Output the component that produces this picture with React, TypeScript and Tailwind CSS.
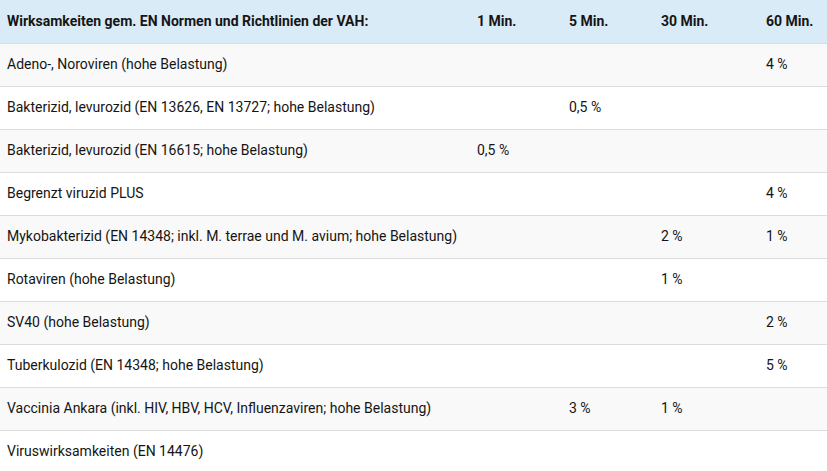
import React from "react";

const rows: [string, string, string, string, string][] = [
  ["Adeno-, Noroviren (hohe Belastung)", "", "", "", "4 %"],
  ["Bakterizid, levurozid (EN 13626, EN 13727; hohe Belastung)", "", "0,5 %", "", ""],
  ["Bakterizid, levurozid (EN 16615; hohe Belastung)", "0,5 %", "", "", ""],
  ["Begrenzt viruzid PLUS", "", "", "", "4 %"],
  ["Mykobakterizid (EN 14348; inkl. M. terrae und M. avium; hohe Belastung)", "", "", "2 %", "1 %"],
  ["Rotaviren (hohe Belastung)", "", "", "1 %", ""],
  ["SV40 (hohe Belastung)", "", "", "", "2 %"],
  ["Tuberkulozid (EN 14348; hohe Belastung)", "", "", "", "5 %"],
  ["Vaccinia Ankara (inkl. HIV, HBV, HCV, Influenzaviren; hohe Belastung)", "", "3 %", "1 %", ""],
  ["Viruswirksamkeiten (EN 14476)", "", "", "", ""],
];

export default function App() {
  return (
    <div className="w-[827px] h-[471px] overflow-hidden bg-white font-['Roboto',sans-serif] text-[14px] text-[#151515]">
      <table className="w-[827px] table-fixed border-collapse">
        <colgroup>
          <col className="w-[470px]" />
          <col className="w-[92px]" />
          <col className="w-[92px]" />
          <col className="w-[105px]" />
          <col className="w-[68px]" />
        </colgroup>
        <thead>
          <tr className="h-[43px] bg-[#d9ebf7] border-b border-[#dcdcdc]">
            <th className="pl-[7px] text-left font-bold text-[#151515]">Wirksamkeiten gem. EN Normen und Richtlinien der VAH:</th>
            <th className="pl-[7px] text-left font-bold text-[#151515]">1 Min.</th>
            <th className="pl-[7px] text-left font-bold text-[#151515]">5 Min.</th>
            <th className="pl-[7px] text-left font-bold text-[#151515]">30 Min.</th>
            <th className="pl-[7px] text-left font-bold text-[#151515]">60 Min.</th>
          </tr>
        </thead>
        <tbody>
          {rows.map((r, i) => (
            <tr
              key={i}
              className={`h-[43px] border-b border-[#dcdcdc] ${i % 2 === 0 ? "bg-[#f9f9f9]" : "bg-white"}`}
            >
              {r.map((c, j) => (
                <td key={j} className="pl-[7px] text-left whitespace-nowrap">
                  {c}
                </td>
              ))}
            </tr>
          ))}
        </tbody>
      </table>
    </div>
  );
}
